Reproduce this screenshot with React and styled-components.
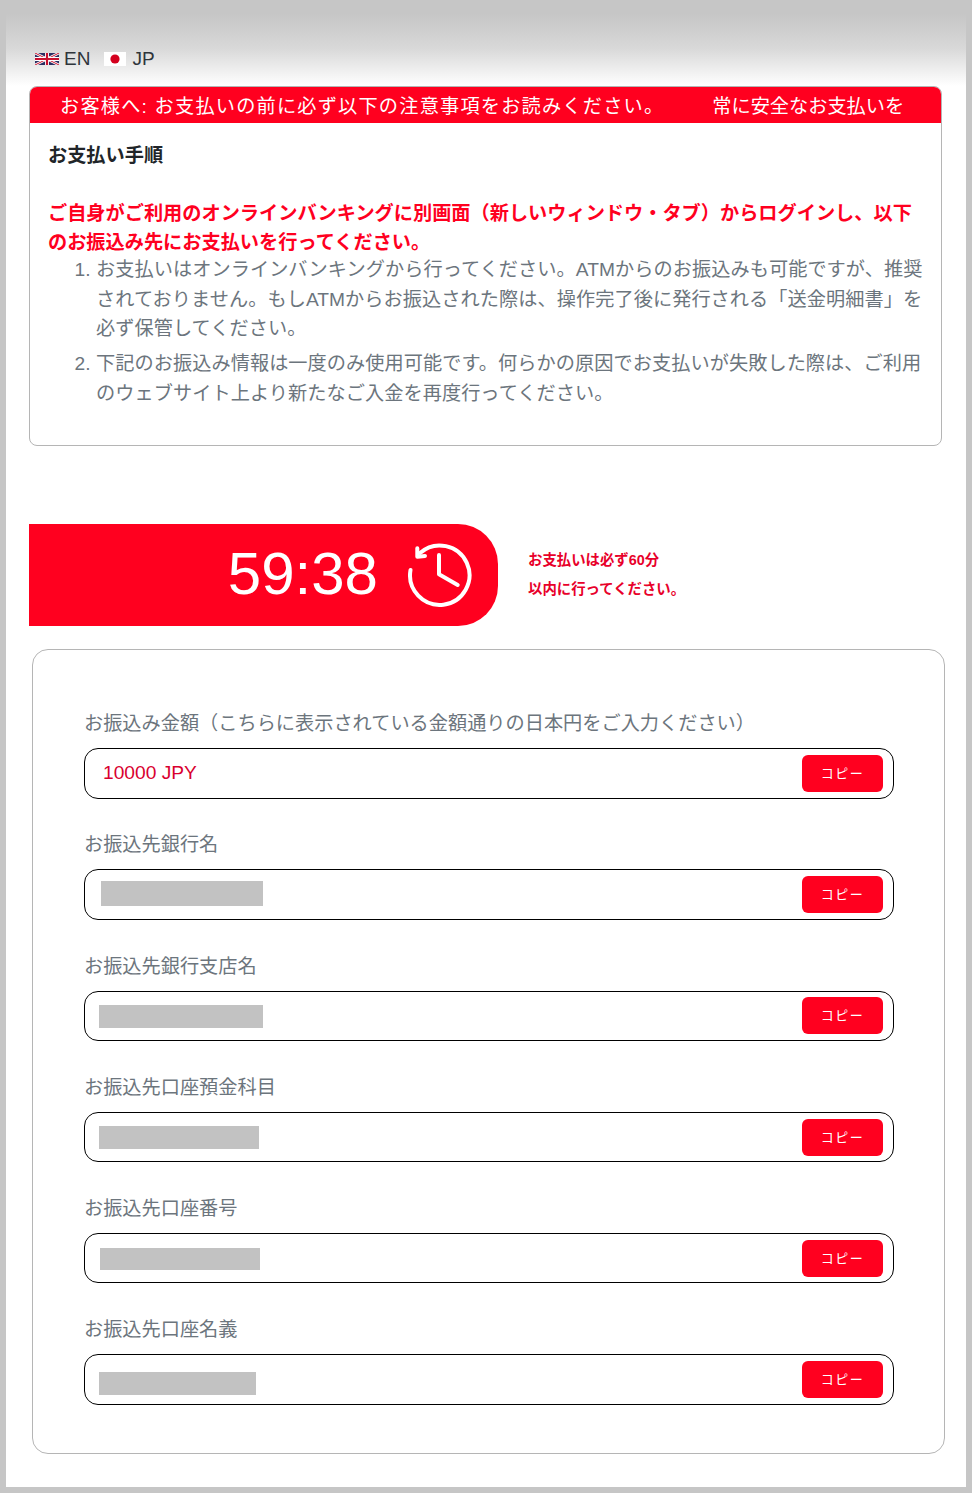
import React from 'react'
import styled, { createGlobalStyle } from 'styled-components'

const GlobalStyle = createGlobalStyle`
  html, body {
    margin: 0;
    padding: 0;
    background: #c6c6c6;
  }
  body {
    font-family: "Liberation Sans", "Noto Sans CJK JP", sans-serif;
  }
`

const Sheet = styled.div`
  width: 960px;
  height: 1487px;
  margin: 0 6px;
  padding: 0 24px 0 23px;
  box-sizing: border-box;
  background: linear-gradient(#c6c6c6 0, #c6c6c6 14px, #d8d8d8 48px, #ffffff 86px);
`

const LangBar = styled.div`
  display: flex;
  align-items: center;
  height: 86px;
  padding: 32px 0 0 6px;
  box-sizing: border-box;
`

const LangItem = styled.span`
  display: inline-flex;
  align-items: center;
  gap: 5px;
  margin-right: 14px;
  font-size: 19px;
  color: #2f353b;
`

const Notice = styled.section`
  height: 360px;
  border: 1px solid #b5b5b5;
  border-radius: 8px;
  box-sizing: border-box;
  overflow: hidden;
  background: #fff;
`

const Ticker = styled.div`
  display: flex;
  align-items: center;
  height: 37px;
  margin: -1px -1px 0;
  padding: 0 0 0 31px;
  background: #ff001f;
  color: #fff;
  font-size: 19.2px;
  white-space: nowrap;
  overflow: hidden;
`

const TickerLead = styled.span`
  letter-spacing: 1.2px;
`

const TickerNext = styled.span`
  margin-left: 48px;
`

const NoticeBody = styled.div`
  padding: 18px 17px 0 18px;
`

const NoticeTitle = styled.div`
  height: 30px;
  line-height: 30px;
  font-size: 19.2px;
  font-weight: 700;
  color: #212529;
`

const Warning = styled.p`
  margin: 28px 0 0;
  font-size: 19.2px;
  line-height: 29px;
  font-weight: 700;
  color: #ff001f;
`

const Steps = styled.ol`
  margin: -2px 0 0;
  padding: 0 0 0 48px;
  font-size: 19.2px;
  line-height: 29.5px;
  letter-spacing: 0.05px;
  color: #6c757d;
`

const Step = styled.li`
  margin-bottom: 5.5px;
`

const TimerRow = styled.div`
  display: flex;
  align-items: center;
  margin-top: 78px;
`

const TimerPill = styled.div`
  display: flex;
  align-items: center;
  justify-content: flex-end;
  gap: 29px;
  width: 469px;
  height: 102px;
  padding-right: 25px;
  box-sizing: border-box;
  background: #ff001f;
  border-radius: 0 40px 40px 0;
  color: #fff;
`

const TimerText = styled.span`
  font-size: 60px;
  line-height: 1;
  margin-top: -3px;
`

const TimerNote = styled.div`
  margin-left: 30px;
  font-size: 14.4px;
  line-height: 29px;
  font-weight: 700;
  color: #e8002a;
`

const Card = styled.section`
  height: 805px;
  margin: 23px -3px 0 3px;
  padding: 59.2px 51px 0;
  border: 1px solid #b5b5b5;
  border-radius: 16px;
  box-sizing: border-box;
  background: #fff;
`

const Field = styled.div`
  height: 121.2px;
`

const Label = styled.div`
  height: 39px;
  line-height: 30px;
  font-size: 19.2px;
  color: #6c757d;
`

const InputBox = styled.div`
  display: flex;
  align-items: center;
  justify-content: space-between;
  width: 810px;
  height: 50.5px;
  padding: 0 10px 0 ${(p) => p.$inset}px;
  border: 1px solid #000;
  border-radius: 14px;
  box-sizing: border-box;
`

const Amount = styled.span`
  font-size: 19.2px;
  color: #d9002f;
`

const Redacted = styled.div`
  width: ${(p) => p.$w}px;
  height: ${(p) => p.$h}px;
  margin-top: ${(p) => p.$shift}px;
  background: #c2c2c2;
`

const CopyButton = styled.button`
  width: 81px;
  height: 37px;
  padding: 0 0 2px;
  border: 0;
  border-radius: 6px;
  background: #ff001f;
  color: #fff;
  font-family: inherit;
  font-size: 13px;
  letter-spacing: 1.5px;
`

function UkFlag () {
  return (
    <svg width="24" height="12" viewBox="0 0 24 12">
      <rect width="24" height="12" fill="#2b2f63" />
      <path d="M0 0L24 12M24 0L0 12" stroke="#fff" strokeWidth="2.6" />
      <path d="M0 0L24 12M24 0L0 12" stroke="#c8102e" strokeWidth="1" />
      <path d="M12 0V12M0 6H24" stroke="#fff" strokeWidth="4" />
      <path d="M12 0V12M0 6H24" stroke="#c8102e" strokeWidth="2.2" />
    </svg>
  )
}

function JpFlag () {
  return (
    <svg width="23" height="14" viewBox="0 0 23 14">
      <rect width="22" height="14" fill="#fff" />
      <circle cx="11" cy="7" r="4.6" fill="#d4001e" />
    </svg>
  )
}

function ClockIcon () {
  return (
    <svg width="66" height="66" viewBox="0 0 66 66" fill="none" stroke="#fff" strokeWidth="4" strokeLinecap="round" strokeLinejoin="round">
      <path d="M3.500 28A29.700 29.700 0 1 0 13 11" />
      <path d="M10.300 6.300V14.700L18 14" />
      <path d="M32 13V32.300L50.700 43" />
    </svg>
  )
}

const fields = [
  { label: 'お振込先銀行名', inset: 16, w: 162, h: 25, shift: -2 },
  { label: 'お振込先銀行支店名', inset: 14, w: 164, h: 23, shift: 1 },
  { label: 'お振込先口座預金科目', inset: 14, w: 160, h: 23, shift: 1 },
  { label: 'お振込先口座番号', inset: 15, w: 160, h: 22, shift: 2 },
  { label: 'お振込先口座名義', inset: 14, w: 157, h: 23, shift: 9 }
]

function App () {
  return (
    <>
      <GlobalStyle />
      <Sheet>
        <LangBar>
          <LangItem><UkFlag />EN</LangItem>
          <LangItem><JpFlag />JP</LangItem>
        </LangBar>
        <Notice>
          <Ticker>
            <TickerLead>お客様へ: お支払いの前に必ず以下の注意事項をお読みください。</TickerLead>
            <TickerNext>常に安全なお支払いを</TickerNext>
          </Ticker>
          <NoticeBody>
            <NoticeTitle>お支払い手順</NoticeTitle>
            <Warning>
              ご自身がご利用のオンラインバンキングに別画面（新しいウィンドウ・タブ）からログインし、以下のお振込み先にお支払いを行ってください。
            </Warning>
            <Steps>
              <Step>お支払いはオンラインバンキングから行ってください。ATMからのお振込みも可能ですが、推奨されておりません。もしATMからお振込された際は、操作完了後に発行される「送金明細書」を必ず保管してください。</Step>
              <Step>下記のお振込み情報は一度のみ使用可能です。何らかの原因でお支払いが失敗した際は、ご利用のウェブサイト上より新たなご入金を再度行ってください。</Step>
            </Steps>
          </NoticeBody>
        </Notice>
        <TimerRow>
          <TimerPill>
            <TimerText>59:38</TimerText>
            <ClockIcon />
          </TimerPill>
          <TimerNote>
            お支払いは必ず60分<br />以内に行ってください。
          </TimerNote>
        </TimerRow>
        <Card>
          <Field>
            <Label>お振込み金額（こちらに表示されている金額通りの日本円をご入力ください）</Label>
            <InputBox $inset={18}>
              <Amount>10000 JPY</Amount>
              <CopyButton>コピー</CopyButton>
            </InputBox>
          </Field>
          {fields.map((f) => (
            <Field key={f.label}>
              <Label>{f.label}</Label>
              <InputBox $inset={f.inset}>
                <Redacted $w={f.w} $h={f.h} $shift={f.shift} />
                <CopyButton>コピー</CopyButton>
              </InputBox>
            </Field>
          ))}
        </Card>
      </Sheet>
    </>
  )
}

export default App
